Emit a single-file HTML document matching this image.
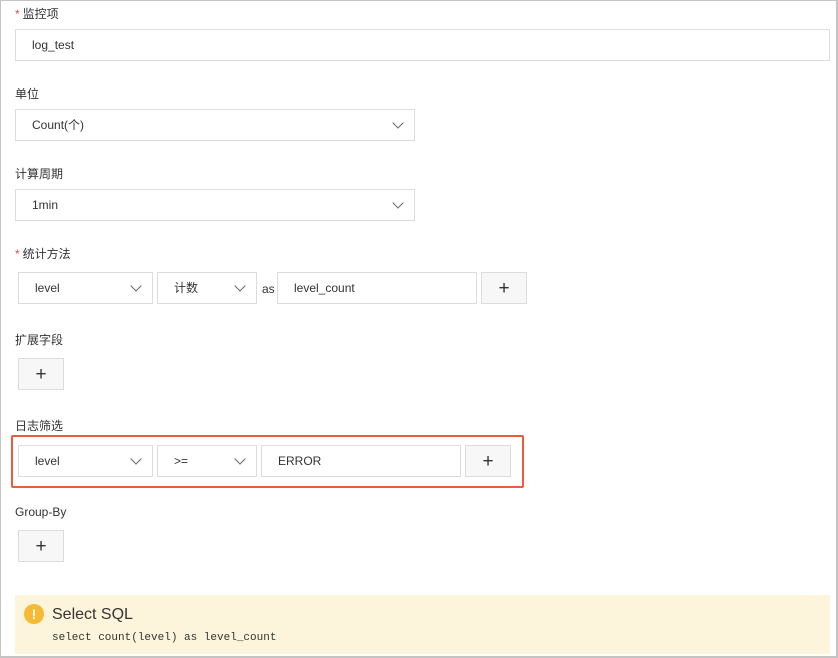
<!DOCTYPE html>
<html><head><meta charset="utf-8"><style>
*{box-sizing:border-box;margin:0;padding:0}
body{width:838px;height:658px;background:#fff;font-family:"Liberation Sans","Noto Sans CJK SC",sans-serif;font-size:12px;color:#333;position:relative;overflow:hidden}
.frame{position:absolute;left:0;top:0;width:838px;height:658px;border:1px solid #c4c4c4;border-right-width:2px;border-bottom-width:2px}
.a{position:absolute}
.lbl{position:absolute;left:15px;font-size:12px;color:#333;line-height:16px}
.star{color:#e5484d;margin-right:3px}
.box{position:absolute;border:1px solid #dcdcdc;background:#fff;height:32px;line-height:30px;padding-left:16px;font-size:12px;color:#333}
.sel::after{content:"";position:absolute;right:12px;top:9px;width:7px;height:7px;border-right:1.3px solid #666;border-bottom:1.3px solid #666;transform:rotate(45deg)}
.btn{position:absolute;border:1px solid #dcdcdc;background:#f7f7f7;height:32px;text-align:center;line-height:31px;font-size:19px;color:#333;font-weight:300}
</style></head><body>
<div class="frame"></div>
<div class="lbl" style="top:6px"><span class="star">*</span>监控项</div>
<div class="box" style="left:15px;top:29px;width:815px">log_test</div>
<div class="lbl" style="top:86px">单位</div>
<div class="box sel" style="left:15px;top:109px;width:400px">Count(个)</div>
<div class="lbl" style="top:166px">计算周期</div>
<div class="box sel" style="left:15px;top:189px;width:400px">1min</div>
<div class="lbl" style="top:246px"><span class="star">*</span>统计方法</div>
<div class="box sel" style="left:18px;top:272px;width:135px">level</div>
<div class="box sel" style="left:157px;top:272px;width:100px">计数</div>
<div class="a" style="left:262px;top:282px">as</div>
<div class="box" style="left:277px;top:272px;width:200px">level_count</div>
<div class="btn" style="left:481px;top:272px;width:46px">+</div>
<div class="lbl" style="top:332px">扩展字段</div>
<div class="btn" style="left:18px;top:358px;width:46px">+</div>
<div class="lbl" style="top:418px">日志筛选</div>
<div class="a" style="left:11px;top:435px;width:513px;height:53px;border:2px solid #ee5b3a;border-radius:2px"></div>
<div class="box sel" style="left:18px;top:445px;width:135px">level</div>
<div class="box sel" style="left:157px;top:445px;width:100px">&gt;=</div>
<div class="box" style="left:261px;top:445px;width:200px">ERROR</div>
<div class="btn" style="left:465px;top:445px;width:46px">+</div>
<div class="lbl" style="top:504px">Group-By</div>
<div class="btn" style="left:18px;top:530px;width:46px">+</div>
<div class="a" style="left:15px;top:595px;width:815px;height:59px;background:#fdf5db"></div>
<div class="a" style="left:24px;top:604px;width:20px;height:20px;border-radius:50%;background:#f6ba32;color:#fff;font-weight:bold;text-align:center;line-height:20px;font-size:14px">!</div>
<div class="a" style="left:52px;top:605px;font-size:16px;color:#333;line-height:20px">Select SQL</div>
<div class="a" style="left:52px;top:632px;font-family:'Liberation Mono',monospace;font-size:11px;color:#333">select count(level) as level_count</div>
</body></html>
